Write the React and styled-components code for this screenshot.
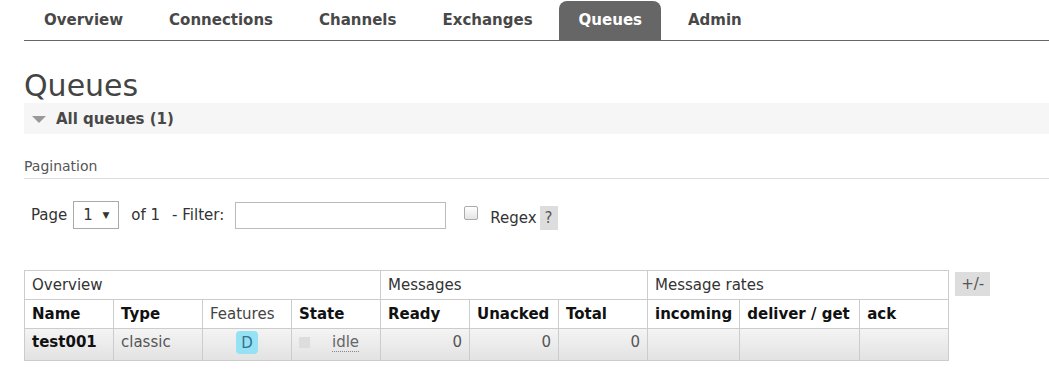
import styled, { createGlobalStyle } from "styled-components";

const Global = createGlobalStyle`
  body {
    margin: 0;
    background: #fff;
    font-family: "DejaVu Sans", Verdana, sans-serif;
    color: #484848;
  }
`;

const tabs = ["Overview", "Connections", "Channels", "Exchanges", "Queues", "Admin"];

const Page = styled.div`
  padding: 0 0 0 24px;
`;

const Nav = styled.ul`
  display: flex;
  margin: 0;
  padding: 1px 0 0 0;
  list-style: none;
  border-bottom: 1px solid #666;
  gap: 7px;
`;

const Tab = styled.li`
  height: 39px;
  box-sizing: border-box;
  padding: 10px 19px 0 20px;
  font-size: 15px;
  font-weight: bold;
  color: ${(p) => (p.$active ? "#fff" : "#484848")};
  background: ${(p) => (p.$active ? "#666" : "transparent")};
  border-radius: 8px 8px 0 0;
  white-space: nowrap;
`;

const Title = styled.h1`
  margin: 28px 0 0 0;
  font-size: 30px;
  font-weight: normal;
  color: #444;
  line-height: 34px;
`;

const SectionBar = styled.div`
  display: flex;
  align-items: center;
  gap: 10px;
  height: 31px;
  background: #f6f6f6;
  padding-left: 8px;
  font-size: 15px;
  font-weight: bold;
  color: #484848;
`;

const Triangle = styled.span`
  width: 0;
  height: 0;
  border-left: 7px solid transparent;
  border-right: 7px solid transparent;
  border-top: 7px solid #999;
  margin-top: 2px;
`;

const SubHeading = styled.div`
  margin-top: 24px;
  font-size: 14px;
  color: #555;
  padding-bottom: 4px;
  border-bottom: 1px solid #ddd;
`;

const Controls = styled.div`
  display: flex;
  align-items: center;
  margin-top: 21px;
  padding-left: 7px;
  font-size: 15px;
  color: #333;
`;

const Label = styled.span`
  margin-left: ${(p) => p.$ml || 0}px;
  margin-top: ${(p) => p.$mt || 0}px;
`;

const Select = styled.div`
  display: flex;
  align-items: center;
  justify-content: space-between;
  width: 46px;
  height: 28px;
  box-sizing: border-box;
  border: 1px solid #aaa;
  padding: 0 9px 0 9px;
  margin: 0 12px 0 6px;
  font-size: 15px;
  span { font-size: 9px; }
`;

const Input = styled.div`
  width: 211px;
  height: 27px;
  box-sizing: border-box;
  border: 1px solid #bbb;
  margin: 0 18px 0 11px;
`;

const Check = styled.span`
  width: 12px;
  height: 12px;
  border: 1px solid #aaa;
  border-radius: 2px;
  background: linear-gradient(#fff, #e4e4e4);
  margin-right: 12px;
  margin-top: -4px;
`;

const Help = styled.span`
  display: inline-flex;
  align-items: center;
  justify-content: center;
  background: #ddd;
  width: 18px;
  height: 24px;
  margin-left: 3px;
  margin-top: 6px;
  font-size: 15px;
  color: #555;
`;

const TableRow = styled.div`
  display: flex;
  align-items: flex-start;
  gap: 6px;
  margin-top: 40px;
`;

const Table = styled.table`
  border-collapse: collapse;
  font-size: 15px;
  color: #222;
  th, td {
    border: 1px solid #ccc;
    height: 29px;
    box-sizing: border-box;
    padding: 0 7px;
    text-align: left;
    white-space: nowrap;
  }
`;

const GroupTh = styled.th`
  font-weight: normal;
  color: #333;
`;

const ColTh = styled.th`
  font-weight: ${(p) => (p.$plain ? "normal" : "bold")};
  color: ${(p) => (p.$plain ? "#444" : "#111")};
  text-align: left;
`;

const DataRow = styled.tr`
  background: linear-gradient(#f4f4f4, #e2e2e2);
  td { height: 32px; padding-bottom: 5px; }
`;

const Cell = styled.td`
  text-align: ${(p) => p.$align || "left"} !important;
  font-weight: ${(p) => (p.$bold ? "bold" : "normal")};
  color: ${(p) => (p.$bold ? "#111" : "#555")};
`;

const Badge = styled.span`
  display: inline-block;
  background: #95e2f5;
  color: #3a6f8c;
  border-radius: 4px;
  padding: 3px 5px 2px;
  font-size: 15px;
`;

const StateBox = styled.span`
  display: inline-block;
  width: 11px;
  height: 11px;
  background: #ddd;
  margin-right: 22px;
  vertical-align: middle;
`;

const Idle = styled.span`
  border-bottom: 1px dotted #888;
  color: #666;
`;

const Toggle = styled.span`
  background: #ddd;
  padding: 3px 6px;
  margin-top: 2px;
  font-size: 15px;
  color: #555;
`;

const widths = [89, 89, 89, 89, 89, 89, 89, 91, 120, 89];

export default function App() {
  return (
    <>
      <Global />
      <Page>
        <Nav>
          {tabs.map((t) => (
            <Tab key={t} $active={t === "Queues"}>
              {t}
            </Tab>
          ))}
        </Nav>
        <Title>Queues</Title>
        <SectionBar>
          <Triangle />
          All queues (1)
        </SectionBar>
        <SubHeading>Pagination</SubHeading>
        <Controls>
          <Label>Page</Label>
          <Select>
            1 <span>▼</span>
          </Select>
          <Label>of 1</Label>
          <Label $ml={12}>- Filter:</Label>
          <Input />
          <Check />
          <Label $mt={6}>Regex</Label>
          <Help>?</Help>
        </Controls>
        <TableRow>
          <Table>
            <colgroup>
              {widths.map((w, i) => (
                <col key={i} style={{ width: w }} />
              ))}
            </colgroup>
            <thead>
              <tr>
                <GroupTh colSpan={4}>Overview</GroupTh>
                <GroupTh colSpan={3}>Messages</GroupTh>
                <GroupTh colSpan={3}>Message rates</GroupTh>
              </tr>
              <tr>
                <ColTh>Name</ColTh>
                <ColTh>Type</ColTh>
                <ColTh $plain>Features</ColTh>
                <ColTh>State</ColTh>
                <ColTh>Ready</ColTh>
                <ColTh>Unacked</ColTh>
                <ColTh>Total</ColTh>
                <ColTh>incoming</ColTh>
                <ColTh>deliver / get</ColTh>
                <ColTh>ack</ColTh>
              </tr>
            </thead>
            <tbody>
              <DataRow>
                <Cell $bold>test001</Cell>
                <Cell>classic</Cell>
                <Cell $align="center">
                  <Badge>D</Badge>
                </Cell>
                <Cell>
                  <StateBox />
                  <Idle>idle</Idle>
                </Cell>
                <Cell $align="right">0</Cell>
                <Cell $align="right">0</Cell>
                <Cell $align="right">0</Cell>
                <Cell />
                <Cell />
                <Cell />
              </DataRow>
            </tbody>
          </Table>
          <Toggle>+/-</Toggle>
        </TableRow>
      </Page>
    </>
  );
}
